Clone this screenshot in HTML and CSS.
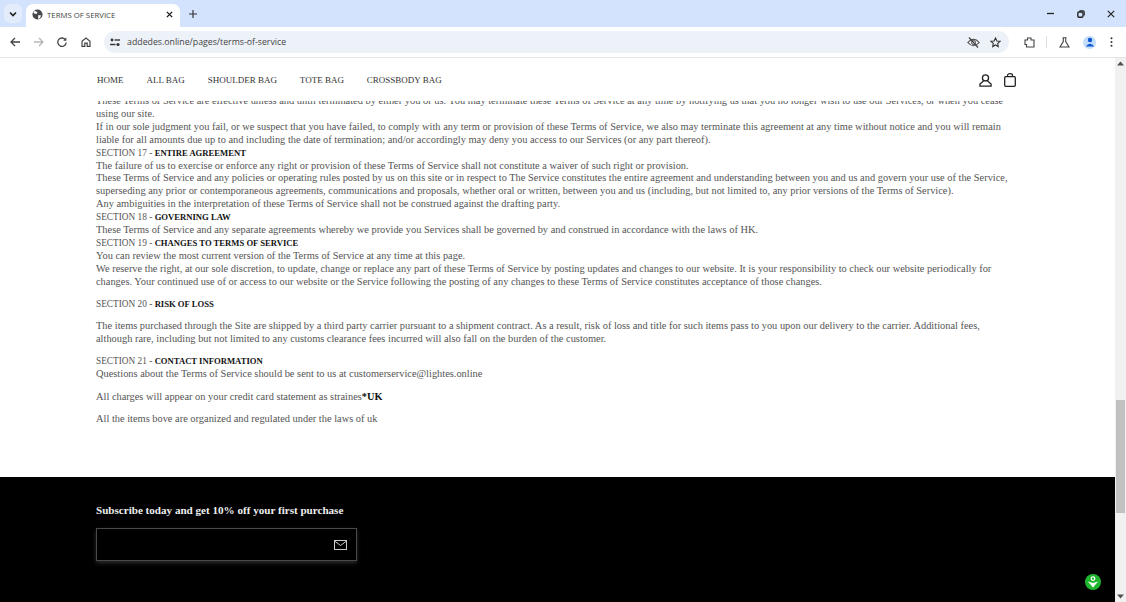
FILE: index.html
```html
<!DOCTYPE html>
<html lang="en">
<head>
<meta charset="utf-8">
<title>TERMS OF SERVICE</title>
<link rel="stylesheet" href="styles.css">
</head>
<body>
<div class="tabstrip">
  <div class="tab-search"><svg width="10" height="10" viewBox="0 0 10 10"><path d="M2 3.5 5 6.5 8 3.5" fill="none" stroke="#1f1f1f" stroke-width="1.6"/></svg></div>
  <div class="tab">
    <svg width="11" height="11" viewBox="0 0 12 12"><circle cx="6" cy="6" r="5.5" fill="#45474a"/><path d="M3 2 6 3.5 5 5.5 2.5 5 1.5 3.5ZM7 6.5 10 7 8.5 10 6.5 10.5Z" fill="#fff"/></svg>
    <span class="tab-title">TERMS OF SERVICE</span>
    <svg class="tab-close" width="7" height="7" viewBox="0 0 8 8"><path d="M1 1 7 7M7 1 1 7" stroke="#1f1f1f" stroke-width="1.6"/></svg>
  </div>
  <svg class="new-tab" width="8" height="8" viewBox="0 0 9 9"><path d="M4.5 0V9M0 4.5H9" stroke="#333" stroke-width="1.3"/></svg>
  <div class="win-controls">
    <svg width="9" height="9" viewBox="0 0 9 9"><path d="M1 4.5H8" stroke="#222" stroke-width="1.3"/></svg>
    <svg width="8" height="8" viewBox="0 0 10 10"><rect x="1" y="2.5" width="6.5" height="6.5" rx="1.5" fill="none" stroke="#222" stroke-width="1.7"/><path d="M3 1.2H7.5Q9 1.2 9 2.7V7" fill="none" stroke="#222" stroke-width="1.5"/></svg>
    <svg width="8" height="8" viewBox="0 0 10 10"><path d="M1 1 9 9M9 1 1 9" stroke="#222" stroke-width="1.5"/></svg>
  </div>
</div>
<div class="toolbar">
  <svg class="tb-icon" width="10" height="10" viewBox="0 0 10 10"><path d="M10 5H1M5 1 1 5 5 9" fill="none" stroke="#444" stroke-width="1.3"/></svg>
  <svg class="tb-icon" width="10" height="10" viewBox="0 0 10 10"><path d="M0 5H9M5 1 9 5 5 9" fill="none" stroke="#b4b6b8" stroke-width="1.3"/></svg>
  <svg class="tb-icon" width="10" height="10" viewBox="0 0 10 10"><path d="M8.6 3A4.2 4.2 0 1 0 9.2 5.5" fill="none" stroke="#444" stroke-width="1.3"/><path d="M9.4 .6V3.8H6.2Z" fill="#444"/></svg>
  <svg class="tb-icon" width="10" height="10" viewBox="0 0 10 10"><path d="M1 4.2 5 1 9 4.2V9.4H6.2V6.2H3.8V9.4H1Z" fill="none" stroke="#444" stroke-width="1.2"/></svg>
  <div class="omnibox">
    <svg class="site-info" width="10" height="9" viewBox="0 0 10 9"><circle cx="2" cy="2" r="1.4" fill="#333"/><path d="M4.5 2H10" stroke="#333" stroke-width="1.4"/><path d="M0 6.5H5.5" stroke="#333" stroke-width="1.4"/><circle cx="8" cy="6.5" r="1.6" fill="#333"/></svg>
    <span class="url">addedes.online/pages/terms-of-service</span>
    <svg class="eye" width="13" height="11" viewBox="0 0 13 11"><path d="M.8 5.5Q6.5-1 12.2 5.5 6.5 12 .8 5.5Z" fill="none" stroke="#444" stroke-width="1.1"/><circle cx="6.5" cy="5.5" r="2" fill="none" stroke="#444"/><path d="M2 .5 11 10.5" stroke="#444" stroke-width="1.2"/></svg>
    <svg width="11" height="11" viewBox="0 0 11 11"><path d="M5.5 1 6.9 4 10 4.3 7.7 6.4 8.3 9.6 5.5 8 2.7 9.6 3.3 6.4 1 4.3 4.1 4Z" fill="none" stroke="#333" stroke-width="1.1"/></svg>
  </div>
  <svg class="ext" width="11" height="11" viewBox="0 0 11 11"><path d="M1 3H3.5V1H7V3H10V10H2.5V7.5H1Z" fill="none" stroke="#444" stroke-width="1.1"/></svg>
  <span class="tb-sep"></span>
  <svg class="flask" width="11" height="11" viewBox="0 0 11 11"><path d="M3.5 .8H7.5M4.3 1V4.5L1 10H10L6.7 4.5V1" fill="none" stroke="#444" stroke-width="1.1"/></svg>
  <span class="avatar"><svg width="10" height="10" viewBox="0 0 10 10"><circle cx="5" cy="3" r="2.2" fill="#0b57d0"/><path d="M.8 9.5Q5 4 9.2 9.5Z" fill="#0b57d0"/></svg></span>
  <svg class="menu" width="3" height="10" viewBox="0 0 3 10"><circle cx="1.5" cy="1.2" r="1" fill="#333"/><circle cx="1.5" cy="5" r="1" fill="#333"/><circle cx="1.5" cy="8.8" r="1" fill="#333"/></svg>
</div>
<div class="viewport">
  <div class="page">
    <header class="site-header">
      <nav class="nav">
        <a>HOME</a><a>ALL BAG</a><a>SHOULDER BAG</a><a>TOTE BAG</a><a>CROSSBODY BAG</a>
      </nav>
      <div class="header-icons">
        <svg width="13" height="13" viewBox="0 0 14 14"><circle cx="7" cy="4.2" r="3.3" fill="none" stroke="#222" stroke-width="1.4"/><path d="M4.8 7.6 1 10.8V13H13V10.8L9.2 7.6" fill="none" stroke="#222" stroke-width="1.4"/></svg>
        <svg width="12" height="14" viewBox="0 0 12 14"><rect x=".7" y="3.7" width="10.6" height="9.6" rx="1" fill="none" stroke="#222" stroke-width="1.3"/><path d="M3.5 3.7V2.5Q3.5.7 6 .7 8.5.7 8.5 2.5V3.7" fill="none" stroke="#222" stroke-width="1.2"/></svg>
      </div>
    </header>
    <main class="content">
      <div class="terms">
        <p>These Terms of Service are effective unless and until terminated by either you or us. You may terminate these Terms of Service at any time by notifying us that you no longer wish to use our Services, or when you cease using our site.</p>
        <p>If in our sole judgment you fail, or we suspect that you have failed, to comply with any term or provision of these Terms of Service, we also may terminate this agreement at any time without notice and you will remain liable for all amounts due up to and including the date of termination; and/or accordingly may deny you access to our Services (or any part thereof).</p>
        <p class="sec">SECTION 17 - <b>ENTIRE AGREEMENT</b></p>
        <p>The failure of us to exercise or enforce any right or provision of these Terms of Service shall not constitute a waiver of such right or provision.</p>
        <p>These Terms of Service and any policies or operating rules posted by us on this site or in respect to The Service constitutes the entire agreement and understanding between you and us and govern your use of the Service, superseding any prior or contemporaneous agreements, communications and proposals, whether oral or written, between you and us (including, but not limited to, any prior versions of the Terms of Service).</p>
        <p>Any ambiguities in the interpretation of these Terms of Service shall not be construed against the drafting party.</p>
        <p class="sec">SECTION 18 - <b>GOVERNING LAW</b></p>
        <p>These Terms of Service and any separate agreements whereby we provide you Services shall be governed by and construed in accordance with the laws of HK.</p>
        <p class="sec">SECTION 19 - <b>CHANGES TO TERMS OF SERVICE</b></p>
        <p>You can review the most current version of the Terms of Service at any time at this page.</p>
        <p>We reserve the right, at our sole discretion, to update, change or replace any part of these Terms of Service by posting updates and changes to our website. It is your responsibility to check our website periodically for changes. Your continued use of or access to our website or the Service following the posting of any changes to these Terms of Service constitutes acceptance of those changes.</p>
        <p class="sec gap">SECTION 20 - <b>RISK OF LOSS</b></p>
        <p class="gap">The items purchased through the Site are shipped by a third party carrier pursuant to a shipment contract. As a result, risk of loss and title for such items pass to you upon our delivery to the carrier. Additional fees, although rare, including but not limited to any customs clearance fees incurred will also fall on the burden of the customer.</p>
        <p class="sec gap">SECTION 21 - <b>CONTACT INFORMATION</b></p>
        <p>Questions about the Terms of Service should be sent to us at customerservice@lightes.online</p>
        <p class="gap">All charges will appear on your credit card statement as straines<b>*UK</b></p>
        <p class="gap">All the items bove are organized and regulated under the laws of uk</p>
      </div>
    </main>
    <footer class="footer">
      <h2 class="sub-title">Subscribe today and get 10% off your first purchase</h2>
      <div class="sub-field">
        <svg width="13" height="10" viewBox="0 0 13 10"><rect x=".5" y=".5" width="12" height="9" fill="none" stroke="#ccc"/><path d="M.5 1 6.5 5.5 12.5 1" fill="none" stroke="#ccc"/></svg>
      </div>
    </footer>
    <div class="badge"><svg width="16" height="16" viewBox="0 0 16 16"><circle cx="8" cy="8" r="8" fill="#1fb52f"/><circle cx="8" cy="4.6" r="1.8" fill="none" stroke="#fff" stroke-width="1.2"/><path d="M2.8 7.5 8 9 13.2 7.5 10.5 10.5 8 13.5 5.5 10.5Z" fill="#fff"/></svg></div>
  </div>
  <div class="scrollbar">
    <svg width="7" height="5" viewBox="0 0 7 5"><path d="M3.5 .5 7 4.5H0Z" fill="#505050"/></svg>
    <div class="track"><div class="thumb"></div></div>
    <svg width="7" height="5" viewBox="0 0 7 5"><path d="M3.5 4.5 7 .5H0Z" fill="#505050"/></svg>
  </div>
</div>
</body>
</html>
```
FILE: styles.css
```css
* { box-sizing: border-box; }
html, body { margin: 0; height: 100%; overflow: hidden; }
body { display: flex; flex-direction: column; font-family: "Liberation Sans", sans-serif; background: #fff; }
svg { display: block; flex: none; }

.tabstrip { height: 27px; flex: none; background: #d3e3fd; display: flex; align-items: flex-end; padding-left: 4px; }
.tab-search { width: 18px; height: 19px; margin: 0 4px 4px 0; border-radius: 6px; background: #e3ecfb; display: flex; align-items: center; justify-content: center; }
.tab { width: 154px; height: 23px; background: #fff; border-radius: 7px 7px 0 0; display: flex; align-items: center; padding: 0 7px 2px 6px; margin-right: 4px; }
.tab-title { flex: 1; margin-left: 4px; font-family: "Open Sans", sans-serif; font-size: 7.8px; color: #444; white-space: nowrap; }
.new-tab { margin: 0 0 9px 5px; }
.win-controls { margin-left: auto; height: 27px; display: flex; align-items: center; gap: 22px; padding-right: 11px; }

.toolbar { height: 31px; flex: none; background: #fff; border-bottom: 1px solid #e2e3e5; display: flex; align-items: center; padding-left: 10px; }
.tb-icon { margin-right: 13.7px; }
.tb-icon:nth-of-type(4) { margin-right: 13px; }
.omnibox { width: 905px; height: 22px; background: #edf1f8; border-radius: 11px; display: flex; align-items: center; padding: 0 8px 0 0; color: #333; }
.site-info { margin-right: 7px; margin-left: 6px; }
.url { flex: 1; font-family: "Open Sans", sans-serif; font-size: 8.75px; color: #444; white-space: nowrap; }
.eye { margin-right: 10px; }
.ext { margin-left: 15px; }
.tb-sep { width: 1px; height: 12px; background: #dfe1e4; margin: 0 12px 0 11px; }
.flask { margin-right: 13px; }
.avatar { width: 13px; height: 13px; border-radius: 50%; background: #c3dcfb; display: flex; align-items: center; justify-content: center; margin-right: 14px; }

.viewport { flex: 1; min-height: 0; display: flex; }
.page { flex: 1; min-width: 0; display: flex; flex-direction: column; position: relative; overflow: hidden; }
.site-header { height: 43px; flex: none; display: flex; align-items: center; justify-content: space-between; padding: 1px 99px 0 97px; background: #fff; position: relative; z-index: 1; }
.nav { display: flex; gap: 22.9px; font-family: "Liberation Serif", serif; font-size: 9px; color: #333; }
.header-icons { display: flex; gap: 12px; align-items: center; }

.content { height: 376px; flex: none; overflow: hidden; }
.terms { margin-top: -6px; padding: 0 100px 0 96px; font-family: "Liberation Serif", serif; font-size: 10.4px; line-height: 12.9px; color: #555; }
.terms p { margin: 0; }
.terms b { color: #111; }
.terms .sec { font-size: 9.3px; }
.terms .sec b { font-size: 8.65px; }
.terms .gap { margin-top: 9.4px; }

.footer { flex: 1; background: #000; padding: 27px 0 0 96px; }
.sub-title { margin: 0 0 11px; font-family: "Liberation Serif", serif; font-size: 11.1px; line-height: 13px; font-weight: 700; color: #eee; }
.sub-field { width: 261px; height: 33px; border: 1px solid #4a4a4a; box-shadow: 0 2px 4px #2c2c2c; display: flex; align-items: center; justify-content: flex-end; padding-right: 9px; }

.badge { position: absolute; right: 14px; bottom: 12px; }

.scrollbar { width: 11px; flex: none; background: #f1f1f1; display: flex; flex-direction: column; align-items: center; padding: 3px 0; }
.track { flex: 1; width: 100%; padding-top: 334px; }
.thumb { width: 9px; height: 113px; margin-left: 1px; background: #c1c1c1; }
```
